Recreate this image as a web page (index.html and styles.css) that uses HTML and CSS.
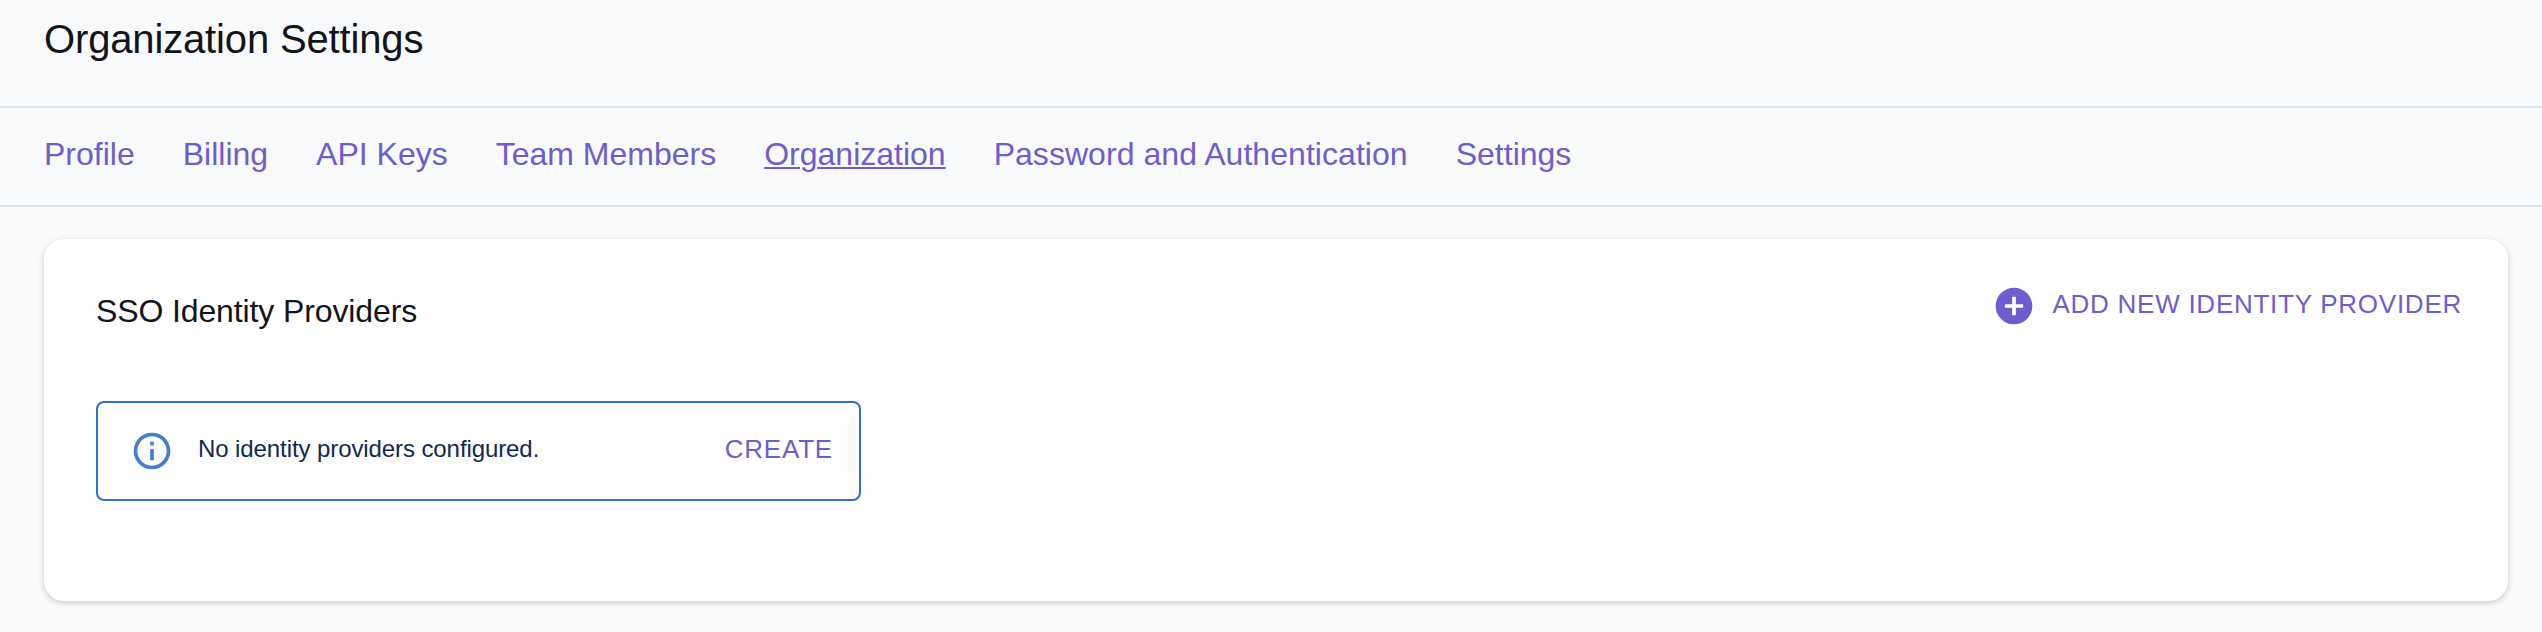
FILE: index.html
```html
<!DOCTYPE html>
<html lang="en">
<head>
<meta charset="utf-8">
<title>Organization Settings</title>
<link rel="stylesheet" href="styles.css">
</head>
<body>
<header class="header"><h1 class="title">Organization Settings</h1></header>
<nav class="tabs">
<a class="tab">Profile</a>
<a class="tab">Billing</a>
<a class="tab">API Keys</a>
<a class="tab">Team Members</a>
<a class="tab active">Organization</a>
<a class="tab tab-auth">Password and Authentication</a>
<a class="tab">Settings</a>
</nav>
<main class="card">
<div class="card-head">
<h2 class="subtitle">SSO Identity Providers</h2>
<button class="add"><svg class="plus" viewBox="0 0 24 24"><path d="M12 2C6.48 2 2 6.48 2 12s4.48 10 10 10 10-4.48 10-10S17.52 2 12 2zm5 11h-4v4h-2v-4H7v-2h4V7h2v4h4v2z"/></svg><span class="add-label">ADD NEW IDENTITY PROVIDER</span></button>
</div>
<div class="alert">
<svg class="info" viewBox="0 0 24 24"><path d="M11,9H13V7H11M12,20C7.59,20 4,16.41 4,12C4,7.59 7.59,4 12,4C16.41,4 20,7.59 20,12C20,16.41 16.41,20 12,20M12,2A10,10 0 0,0 2,12A10,10 0 0,0 12,22A10,10 0 0,0 22,12A10,10 0 0,0 12,2M11,17H13V11H11V17Z"/></svg>
<span class="message">No identity providers configured.</span>
<button class="create">CREATE</button>
</div>
</main>
</body>
</html>
```
FILE: styles.css
```css
* { box-sizing: border-box; }
body { margin: 0; height: 632px; overflow: hidden; background: #f9fafc; font-family: "Liberation Sans", Arial, sans-serif; color: #121419; }
.header { height: 108px; padding: 15px 44px; border-bottom: 2px solid #e1e3ea; }
.title { margin: 0; font-size: 40px; line-height: 48px; font-weight: 400; letter-spacing: -.15px; white-space: nowrap; }
.tabs { height: 99px; padding: 26px 44px; border-bottom: 2px solid #e1e3ea; display: flex; gap: 48px; }
.tab { font-size: 32px; line-height: 40px; color: #6e5dcf; white-space: nowrap; }
.tab-auth { letter-spacing: .05px; }
.active { text-decoration: underline; text-decoration-thickness: 2px; text-underline-offset: 2px; }
.card { margin: 32px 34px 0 44px; height: 362px; padding: 46px 46px 0 52px; background: #fff; border-radius: 20px; box-shadow: 0 2px 6px rgba(0,0,0,.2); }
.card-head { display: flex; justify-content: space-between; height: 116px; }
.subtitle { margin: 6px 0 0; font-size: 32px; line-height: 40px; font-weight: 400; letter-spacing: -.12px; }
button { border: 0; background: none; padding: 0; font-family: inherit; color: #6e5dcf; }
.add { display: flex; align-items: center; height: 42px; gap: 16px; font-size: 26px; letter-spacing: .74px; }
.add-label { padding-bottom: 3px; }
.plus { width: 44px; height: 44px; fill: #6e5dcf; }
.alert { width: 765px; height: 100px; border: 2px solid #3070c8; border-radius: 8px; display: flex; align-items: center; padding: 0 26px 0 32px; }
.info { width: 44px; height: 44px; fill: #427ecd; }
.message { margin-left: 24px; padding-bottom: 4px; font-size: 24px; letter-spacing: -.09px; color: #0f2a4f; }
.create { margin-left: auto; padding-bottom: 3px; font-size: 26px; letter-spacing: .8px; }
```
